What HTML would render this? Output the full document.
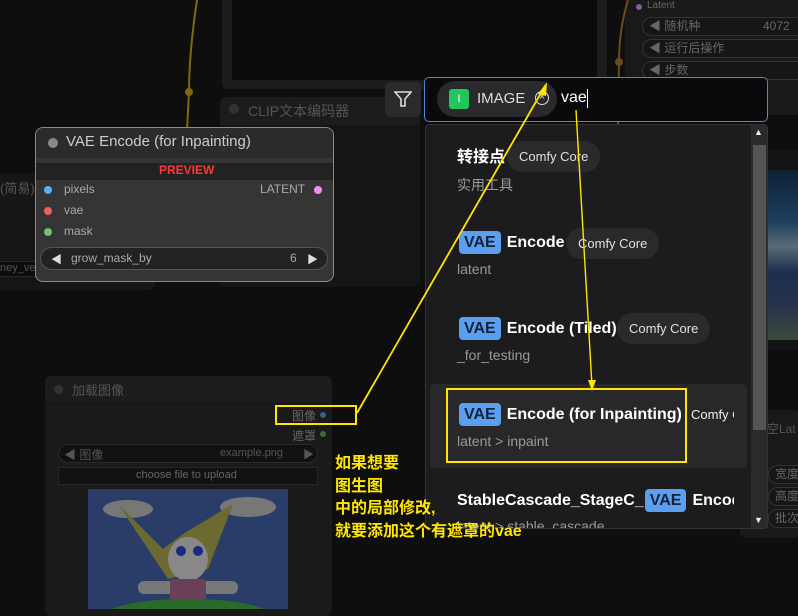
<!DOCTYPE html>
<html><head><meta charset="utf-8"><style>
*{margin:0;padding:0;box-sizing:border-box}
body{width:798px;height:603px;overflow:hidden;background:#0e0e0e;font-family:"Liberation Sans","Noto Sans CJK SC",sans-serif;position:relative}
.a{position:absolute}
.t{position:absolute;white-space:nowrap}
.chip{position:absolute;background:#2a2a2d;border-radius:16px;color:#e0e0e0;font-size:13px;padding:0 12px;height:31px;line-height:31px}
.vae{display:inline-block;background:#5b9ff0;color:#14223a;border-radius:4px;padding:0 5px;height:23px;line-height:23px;font-weight:bold;margin-right:6px}
.title{position:absolute;color:#fff;font-weight:bold;font-size:16px;white-space:nowrap;line-height:23px}
.sub{position:absolute;color:#9a9a9a;font-size:14px;white-space:nowrap}
.rw{position:absolute;left:642px;width:170px;height:19px;border:1px solid #333;border-radius:10px;background:#161616;color:#666;font-size:12px;line-height:17px;padding-left:6px}
</style></head><body>
<div class="a" style="left:222px;top:-10px;width:385px;height:99px;background:#1c1c1c;border-radius:6px"></div>
<div class="a" style="left:232px;top:-10px;width:365px;height:90px;background:#0b0b0b"></div>
<div class="a" style="left:220px;top:97px;width:200px;height:190px;background:#151515;border-radius:6px"></div>
<div class="a" style="left:220px;top:97px;width:200px;height:28px;background:#1c1c1c;border-radius:6px 6px 0 0"></div>
<div class="a" style="left:229px;top:104px;width:10px;height:10px;border-radius:50%;background:#333"></div>
<div class="t" style="left:248px;top:101px;color:#555;font-size:14px">CLIP文本编码器</div>
<div class="a" style="left:-10px;top:174px;width:165px;height:116px;background:#161616;border-radius:6px"></div>
<div class="t" style="left:0;top:178px;color:#555;font-size:13px">(简易)</div>
<div class="a" style="left:-5px;top:261px;width:45px;height:16px;background:#0c0c0c;border:1px solid #2a2a2a"></div>
<div class="t" style="left:0;top:262px;color:#555;font-size:11px">ney_ver</div>
<div class="a" style="left:625px;top:-5px;width:180px;height:120px;background:#191919;border-radius:6px"></div>
<div class="a" style="left:636px;top:4px;width:6px;height:6px;border-radius:50%;background:#8a5a9a"></div>
<div class="t" style="left:647px;top:0px;color:#666;font-size:10px">Latent</div>
<div class="rw" style="top:17px">◀ 随机种<span style="position:absolute;left:120px">4072</span></div>
<div class="rw" style="top:39px">◀ 运行后操作</div>
<div class="rw" style="top:61px">◀ 步数</div>
<div class="a" style="left:740px;top:150px;width:60px;height:200px;background:#141414"></div>
<div class="a" style="left:767px;top:170px;width:31px;height:170px;background:linear-gradient(#0f2236,#1c3e5c 30%,#5a6a78 45%,#1a3050 60%,#28324a 80%,#3a4a3a 100%)"></div>
<div class="a" style="left:740px;top:410px;width:60px;height:128px;background:#191919;border-radius:6px"></div>
<div class="t" style="left:767px;top:420px;color:#555;font-size:12px">空Lat</div>
<div class="rw" style="left:768px;top:465px">宽度</div>
<div class="rw" style="left:768px;top:487px">高度</div>
<div class="rw" style="left:768px;top:509px">批次</div>
<svg class="a" style="left:0;top:0" width="798" height="603">
<path d="M197 0 C191 40 189 70 189 92 L187 130" stroke="#7a6a10" stroke-width="2" fill="none"/>
<circle cx="189" cy="92" r="4" fill="#7a6a10"/>
<path d="M628 0 C622 20 619 40 619 62 L618 125" stroke="#6a4a20" stroke-width="2" fill="none"/>
<circle cx="619" cy="62" r="4" fill="#6a4a20"/>
</svg>
<div class="a" style="left:35px;top:127px;width:299px;height:155px;background:#353535;border:1px solid #8a8a8a;border-radius:8px;overflow:hidden">
<div class="a" style="left:0;top:0;width:299px;height:30px;background:#2b2b2b"></div>
<div class="a" style="left:0;top:35px;width:299px;height:17px;background:#222"></div>
</div>
<div class="a" style="left:48px;top:138px;width:10px;height:10px;border-radius:50%;background:#888"></div>
<div class="t" style="left:66px;top:133px;color:#ccc;font-size:15px">VAE Encode (for Inpainting)</div>
<div class="t" style="left:159px;top:163px;color:#ff3838;font-size:12px;font-weight:bold">PREVIEW</div>
<div class="a" style="left:44px;top:186px;width:8px;height:8px;border-radius:50%;background:#60b0f0"></div>
<div class="a" style="left:44px;top:207px;width:8px;height:8px;border-radius:50%;background:#f06060"></div>
<div class="a" style="left:44px;top:228px;width:8px;height:8px;border-radius:50%;background:#70c070"></div>
<div class="a" style="left:314px;top:186px;width:8px;height:8px;border-radius:50%;background:#f090f0"></div>
<div class="t" style="left:64px;top:182px;color:#aaa;font-size:12px">pixels</div>
<div class="t" style="left:64px;top:203px;color:#aaa;font-size:12px">vae</div>
<div class="t" style="left:64px;top:224px;color:#aaa;font-size:12px">mask</div>
<div class="t" style="left:260px;top:182px;color:#aaa;font-size:12px">LATENT</div>
<div class="a" style="left:40px;top:247px;width:288px;height:23px;background:#222;border:1px solid #555;border-radius:12px"></div>
<div class="t" style="left:51px;top:251px;color:#ddd;font-size:11px">◀</div>
<div class="t" style="left:71px;top:251px;color:#aaa;font-size:12px">grow_mask_by</div>
<div class="t" style="left:290px;top:251px;color:#aaa;font-size:12px">6</div>
<div class="t" style="left:307px;top:251px;color:#ddd;font-size:11px">▶</div>
<div class="a" style="left:45px;top:376px;width:287px;height:240px;background:#1a1a1a;border-radius:6px"></div>
<div class="a" style="left:45px;top:376px;width:287px;height:28px;background:#1c1c1c;border-radius:6px 6px 0 0;border-bottom:1px solid #151515"></div>
<div class="a" style="left:54px;top:385px;width:9px;height:9px;border-radius:50%;background:#333"></div>
<div class="t" style="left:72px;top:380px;color:#555;font-size:13px">加载图像</div>
<div class="t" style="left:292px;top:407px;color:#666;font-size:12px">图像</div>
<div class="a" style="left:320px;top:412px;width:6px;height:6px;border-radius:50%;background:#3a5e80"></div>
<div class="t" style="left:292px;top:427px;color:#666;font-size:12px">遮罩</div>
<div class="a" style="left:320px;top:431px;width:6px;height:6px;border-radius:50%;background:#3e6a3e"></div>
<div class="a" style="left:58px;top:444px;width:260px;height:19px;background:#111;border:1px solid #2a2a2a;border-radius:10px"></div>
<div class="t" style="left:64px;top:446px;color:#555;font-size:12px">◀ 图像</div>
<div class="t" style="left:220px;top:447px;color:#555;font-size:11px">example.png</div>
<div class="t" style="left:303px;top:446px;color:#555;font-size:11px">▶</div>
<div class="a" style="left:58px;top:467px;width:260px;height:18px;background:#111;border:1px solid #262626"></div>
<div class="t" style="left:136px;top:469px;color:#666;font-size:11px">choose file to upload</div>
<div class="a" style="left:88px;top:489px;width:200px;height:120px;background:#2a3d68;overflow:hidden">
<svg width="200" height="120"><ellipse cx="40" cy="20" rx="25" ry="9" fill="#777"/><ellipse cx="160" cy="18" rx="28" ry="10" fill="#777"/>
<path d="M30 15 L75 60 L95 45 L145 15 L120 80 L80 90 Z" fill="#6c6a30"/><ellipse cx="100" cy="70" rx="20" ry="22" fill="#888"/>
<circle cx="93" cy="62" r="5" fill="#1a2a80"/><circle cx="110" cy="62" r="5" fill="#1a2a80"/>
<rect x="50" y="92" width="100" height="13" rx="6" fill="#777"/><rect x="82" y="90" width="36" height="35" rx="4" fill="#6a4058"/>
<ellipse cx="100" cy="125" rx="80" ry="15" fill="#2a6a2a"/></svg></div>
<div class="a" style="left:275px;top:405px;width:82px;height:20px;border:2px solid #ffe600"></div>
<div class="a" style="left:385px;top:82px;width:36px;height:35px;background:#2a2a2c;border-radius:5px"></div>
<svg class="a" style="left:394px;top:90px" width="18" height="18"><path d="M1 2 H17 L11 9 V16 L7 16 V9 Z" fill="none" stroke="#ddd" stroke-width="1.6"/></svg>
<div class="a" style="left:424px;top:77px;width:344px;height:45px;background:#0a0a0c;border:1px solid #4a88d8;border-radius:5px"></div>
<div class="a" style="left:437px;top:81px;width:120px;height:36px;background:#2a2a2d;border-radius:18px"></div>
<div class="a" style="left:449px;top:89px;width:20px;height:20px;background:#22c55e;border-radius:3px;color:#fff;font-size:11px;text-align:center;line-height:20px">I</div>
<div class="t" style="left:477px;top:90px;color:#ddd;font-size:15px">IMAGE</div>
<div class="a" style="left:535px;top:91px;width:14px;height:14px;border:1.5px solid #ddd;border-radius:50%;color:#ddd;font-size:11px;text-align:center;line-height:11px">×</div>
<div class="t" style="left:561px;top:89px;color:#fff;font-size:16px">vae</div>
<div class="a" style="left:587px;top:89px;width:1px;height:19px;background:#fff"></div>
<div class="a" style="left:425px;top:124px;width:343px;height:405px;background:#1c1c1e;border:1px solid #333;border-radius:4px;overflow:hidden">
<div class="a" style="left:325px;top:0;width:17px;height:405px;background:#2a2a2a"></div>
<div class="a" style="left:327px;top:20px;width:13px;height:285px;background:#555"></div>
<div class="t" style="left:328px;top:2px;color:#eee;font-size:9px">▲</div>
<div class="t" style="left:328px;top:390px;color:#eee;font-size:9px">▼</div>
<div class="a" style="left:4px;top:259px;width:317px;height:84px;background:#28282b;border-radius:4px"></div>
</div>
<div class="title" style="left:457px;top:146px">转接点</div>
<div class="chip" style="left:507px;top:141px">Comfy Core</div>
<div class="sub" style="left:457px;top:175px">实用工具</div>
<div class="title" style="left:459px;top:231px"><span class="vae">VAE</span>Encode</div>
<div class="chip" style="left:566px;top:228px">Comfy Core</div>
<div class="sub" style="left:457px;top:261px">latent</div>
<div class="title" style="left:459px;top:317px"><span class="vae">VAE</span>Encode (Tiled)</div>
<div class="chip" style="left:617px;top:313px">Comfy Core</div>
<div class="sub" style="left:457px;top:347px">_for_testing</div>
<div class="title" style="left:459px;top:403px"><span class="vae">VAE</span>Encode (for Inpainting)</div>
<div class="t" style="left:691px;top:407px;color:#eee;font-size:13px;width:43px;overflow:hidden">Comfy Core</div>
<div class="sub" style="left:457px;top:433px">latent &gt; inpaint</div>
<div class="title" style="left:457px;top:489px;width:277px;overflow:hidden">StableCascade_StageC_<span class="vae" style="margin-left:1px">VAE</span>Encode</div>
<div class="a" style="left:457px;top:518px;width:280px;height:10px;overflow:hidden"><div class="sub" style="left:0;top:0">latent &gt; stable_cascade</div></div>
<div class="a" style="left:446px;top:388px;width:241px;height:75px;border:2px solid #ffe600"></div>
<div class="t" style="left:335px;top:453px;color:#ffe600;font-size:16px;font-weight:bold;line-height:22.5px;z-index:5">如果想要<br>图生图<br>中的局部修改,<br>就要添加这个有遮罩的vae</div>
<svg class="a" style="left:0;top:0;z-index:6" width="798" height="603">
<path d="M357 413 L545 86" stroke="#ffe600" stroke-width="1.8" fill="none"/>
<path d="M547 82 L538 94 L546 96 Z" fill="#ffe600"/>
<path d="M576 110 L592 386" stroke="#ffe600" stroke-width="1.4" fill="none"/>
<path d="M592 391 L588 380 L596 380 Z" fill="#ffe600"/>
</svg>
</body></html>
